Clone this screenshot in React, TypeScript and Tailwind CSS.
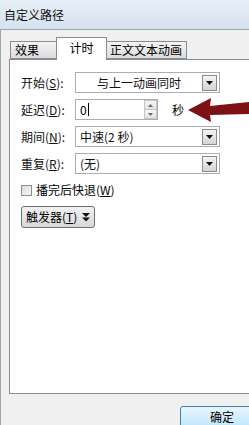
import React from "react";

const font = { fontFamily: '"Noto Sans CJK SC", "Noto Sans", sans-serif' };

function DropBtn() {
  return (
    <div className="w-[15px] h-[16px] border border-[#8a8a8a] bg-gradient-to-b from-[#f4f4f4] to-[#d4d4d4] flex items-center justify-center">
      <svg width="7" height="4" viewBox="0 0 7 4">
        <path d="M0 0 L7 0 L3.5 4 Z" fill="#111" />
      </svg>
    </div>
  );
}

function Select({ text, center }: { text: string; center?: boolean }) {
  return (
    <div className="w-[145px] h-[21px] border border-[#abadb3] bg-white flex items-center pr-[2px]">
      <div className={`flex-1 text-[12px] leading-none text-[#111] ${center ? "text-center" : "pl-[4px]"}`}>{text}</div>
      <DropBtn />
    </div>
  );
}

function Label({ main, key1 }: { main: string; key1: string }) {
  return (
    <div className="w-[55px] pl-px text-[12px] leading-none text-[#111]">
      {main}(<span className="underline">{key1}</span>):
    </div>
  );
}

export default function App() {
  return (
    <div className="relative w-[249px] h-[425px] overflow-hidden bg-[#f0f0f0] flex flex-col" style={font}>
      {/* title bar */}
      <div className="shrink-0 h-[29px] bg-gradient-to-b from-[#e6eef7] to-[#d6e2ef] flex items-center pl-[4px] text-[12px] text-[#111]">
        自定义路径
      </div>
      <div className="flex-1 flex min-h-0">
        <div className="w-[3px] bg-gradient-to-b from-[#c9daec] to-[#b6cce4]" />
        <div className="flex-1 flex flex-col border-l border-t border-[#9aa6b4] bg-[#f0f0f0] pl-[8px] pt-[7px]">
          {/* tabs */}
          <div className="shrink-0 flex items-end ml-[1px] h-[23px] -mb-px relative z-10">
            <div className="w-[46px] h-[18px] border border-[#898c95] border-r-0 bg-gradient-to-b from-[#f3f3f3] to-[#dddddd] text-[12px] leading-none flex items-center pl-[4px] mb-px">
              效果
            </div>
            <div className="w-[51px] h-[23px] border border-[#898c95] border-b-0 bg-white text-[12px] leading-none flex items-center justify-center pb-[2px]">
              计时
            </div>
            <div className="w-[80px] h-[18px] border border-[#898c95] border-l-0 bg-gradient-to-b from-[#f3f3f3] to-[#dddddd] text-[12px] leading-none flex items-center pl-[3px] mb-px">
              正文文本动画
            </div>
          </div>
          {/* panel */}
          <div className="shrink-0 w-[260px] h-[335px] border border-[#898c95] bg-white pl-[10px] pt-[12px] flex flex-col">
            <div className="flex flex-col gap-[6px]">
              <div className="flex items-center">
                <Label main="开始" key1="S" />
                <Select text="与上一动画同时" center />
              </div>
              <div className="flex items-center">
                <Label main="延迟" key1="D" />
                <div className="w-[83px] h-[21px] border border-[#abadb3] bg-white flex items-center">
                  <div className="flex-1 pl-[4px] text-[12px] leading-none flex items-center">
                    0<span className="inline-block w-px h-[13px] bg-black ml-px" />
                  </div>
                  <div className="w-[13px] h-[19px] flex flex-col">
                    <div className="flex-1 border border-[#c5c5c5] bg-gradient-to-b from-[#f6f6f6] to-[#e2e2e2] flex items-center justify-center">
                      <svg width="5" height="3" viewBox="0 0 5 3"><path d="M0 3 L5 3 L2.5 0 Z" fill="#6a6a6a" /></svg>
                    </div>
                    <div className="flex-1 border border-t-0 border-[#c5c5c5] bg-gradient-to-b from-[#f6f6f6] to-[#e2e2e2] flex items-center justify-center">
                      <svg width="5" height="3" viewBox="0 0 5 3"><path d="M0 0 L5 0 L2.5 3 Z" fill="#6a6a6a" /></svg>
                    </div>
                  </div>
                </div>
                <div className="ml-[14px] text-[12px] leading-none">秒</div>
              </div>
              <div className="flex items-center">
                <Label main="期间" key1="N" />
                <Select text="中速(2 秒)" />
              </div>
              <div className="flex items-center">
                <Label main="重复" key1="R" />
                <Select text="(无)" />
              </div>
            </div>
            <div className="flex items-center mt-[10px] pl-px">
              <div className="w-[11px] h-[11px] border border-[#8f8f8f] bg-gradient-to-br from-[#dcdcdc] to-[#f6f6f6]" />
              <div className="ml-[4px] text-[12px] leading-none">
                播完后快退(<span className="underline">W</span>)
              </div>
            </div>
            <div className="mt-[10px] ml-px w-[74px] h-[22px] rounded-[3px] border border-[#707070] bg-gradient-to-b from-[#f2f2f2] to-[#d8d8d8] flex items-center pl-[4px] text-[12px] leading-none">
              触发器(<span className="underline">T</span>)
              <svg className="ml-[5px]" width="8" height="9" viewBox="0 0 8 9">
                <path d="M0 0 L8 0 L4 4 Z M0 4.5 L8 4.5 L4 8.5 Z" fill="#111" />
              </svg>
            </div>
          </div>
          {/* bottom buttons */}
          <div className="shrink-0 mt-[12px] ml-[171px]">
            <div className="w-[84px] h-[22px] rounded-[3px] border border-[#3c7fb1] bg-gradient-to-b from-[#eaf6fd] to-[#bee6fd] flex items-center justify-center text-[12px] leading-none">
              确定
            </div>
          </div>
        </div>
      </div>
      {/* red arrow overlay */}
      <svg className="absolute left-0 top-0 pointer-events-none" width="249" height="425" viewBox="0 0 249 425">
        <path d="M188 110 L211 98 L210 106 L249 102 L249 114 L210 115 L211 122 Z" fill="#7d1214" />
      </svg>
    </div>
  );
}
